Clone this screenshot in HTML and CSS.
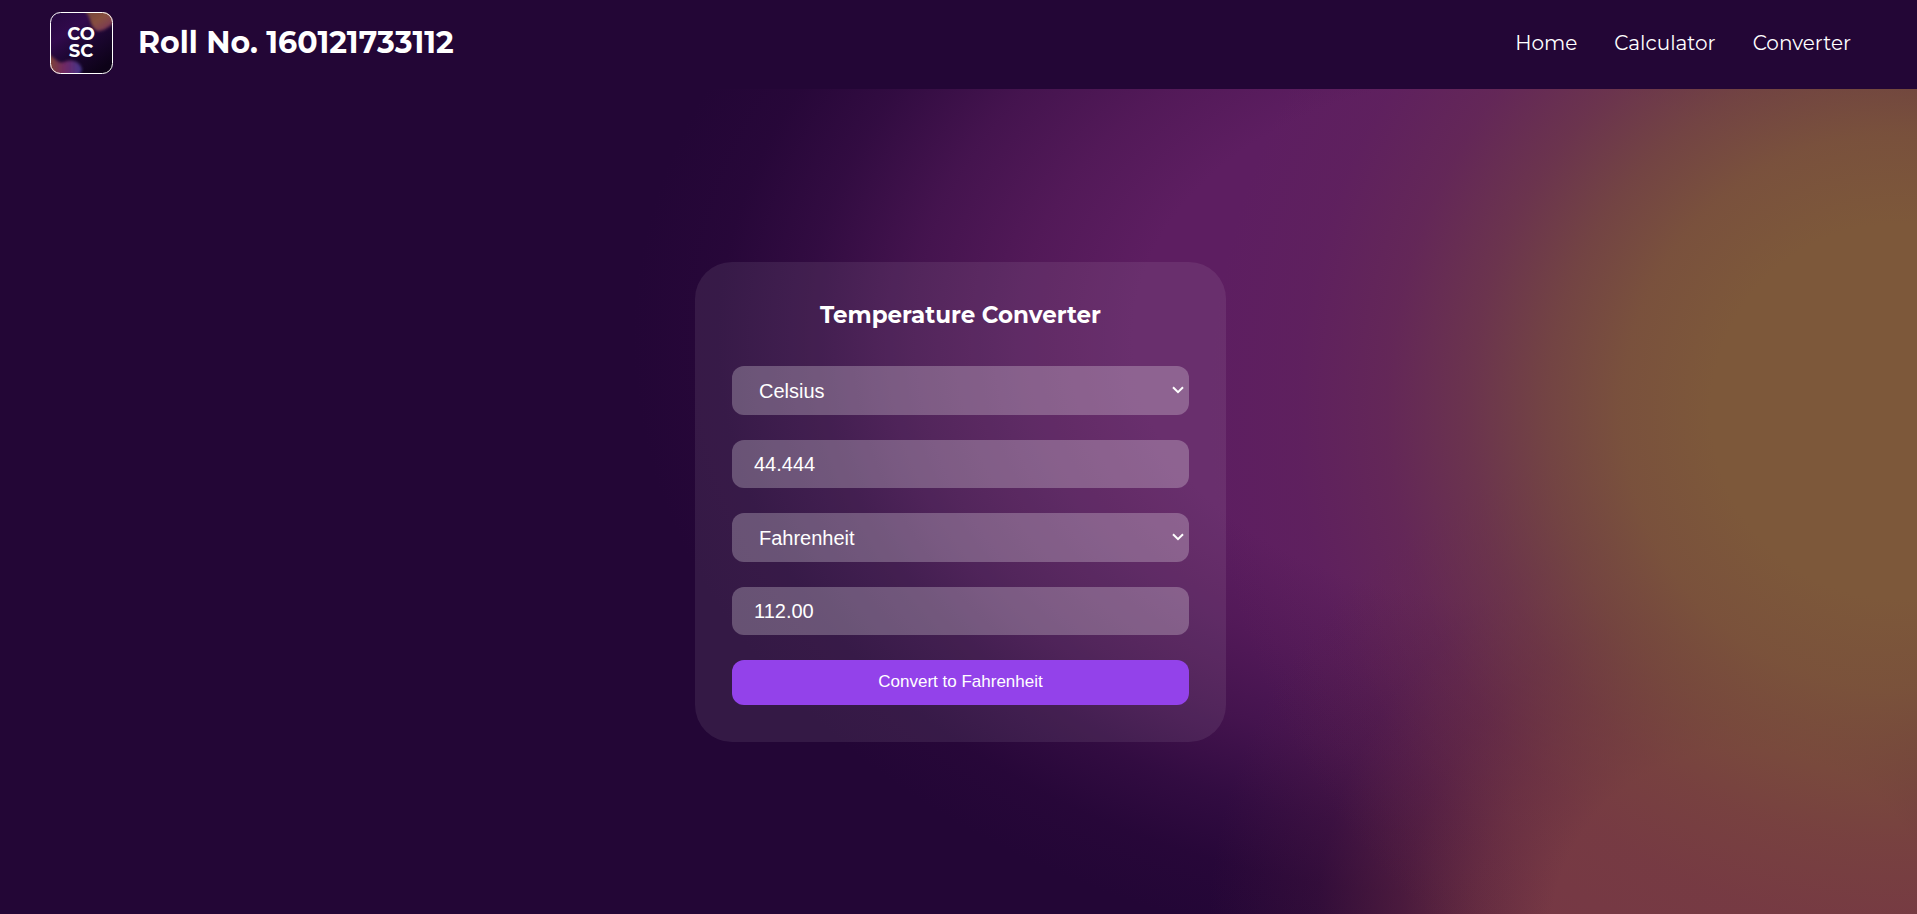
FILE: index.html
```html
<!DOCTYPE html>
<html lang="en">
<head>
<meta charset="utf-8">
<meta name="viewport" content="width=device-width, initial-scale=1">
<title>Temperature Converter</title>
<link rel="stylesheet" href="styles.css">
</head>
<body class="page">
<header class="header">
  <div class="brand">
    <svg class="logo" viewBox="0 0 63 62" role="img" aria-label="COSC">
      <defs>
        <linearGradient id="base" x1="0" y1="0" x2="0.7" y2="1">
          <stop offset="0" stop-color="#25083f"/>
          <stop offset="0.35" stop-color="#310a4c"/>
          <stop offset="0.65" stop-color="#1b0630"/>
          <stop offset="1" stop-color="#0d0218"/>
        </linearGradient>
        <linearGradient id="top" x1="0" y1="0" x2="1" y2="1">
          <stop offset="0" stop-color="#6b4238"/>
          <stop offset="0.5" stop-color="#87503f"/>
          <stop offset="1" stop-color="#742a62"/>
        </linearGradient>
        <linearGradient id="bottom" x1="0" y1="0" x2="1" y2="0">
          <stop offset="0" stop-color="#80492c"/>
          <stop offset="0.5" stop-color="#702764"/>
          <stop offset="1" stop-color="#42358c"/>
        </linearGradient>
        <filter id="soft"><feGaussianBlur stdDeviation="1.6"/></filter>
        <clipPath id="tile"><rect width="63" height="62" rx="10"/></clipPath>
      </defs>
      <g clip-path="url(#tile)">
        <rect width="63" height="62" fill="url(#base)"/>
        <path filter="url(#soft)" fill="url(#top)" d="M32-3C41 3 39 9 43 15C47 23 56 18 66 9V-3Z"/>
        <path filter="url(#soft)" fill="url(#bottom)" d="M-3 41C5 46 8 52 14 50C22 46 31 50 32 58L28 65H-3Z"/>
      </g>
      <rect x="0.5" y="0.5" width="62" height="61" rx="10" fill="none" stroke="#fff"/>
      <text class="logo-text"><tspan x="31" y="28">CO</tspan><tspan x="31" y="45">SC</tspan></text>
    </svg>
    <h1 class="roll">Roll No. 160121733112</h1>
  </div>
  <nav class="nav">
    <a href="#home">Home</a>
    <a href="#calculator">Calculator</a>
    <a href="#converter">Converter</a>
  </nav>
</header>
<main class="main">
  <form class="card">
    <h2 class="title">Temperature Converter</h2>
    <select class="field select" aria-label="From unit"><option>Celsius</option><option>Fahrenheit</option></select>
    <input class="field" type="text" aria-label="Temperature" value="44.444">
    <select class="field select" aria-label="To unit"><option>Fahrenheit</option><option>Celsius</option></select>
    <input class="field" type="text" aria-label="Result" value="112.00" readonly>
    <button class="submit" type="button">Convert to Fahrenheit</button>
  </form>
</main>
</body>
</html>
```
FILE: styles.css
```css
* { box-sizing: border-box; }

.page {
  margin: 0;
  min-height: 100vh;
  display: flex;
  flex-direction: column;
  color: #fff;
  font-family: Montserrat, Inter, sans-serif;
  background-color: #230636;
  background-image:
    radial-gradient(ellipse 36% 76% at 99% 45%, #7d583a 0%, #7d583a 27%, #7c553aec 40%, #7a503ac0 51%, #78483c84 62%, #743e4048 74%, #6d34481a 87%, #6d344800 100%),
    radial-gradient(ellipse 28% 56% at 91% 102%, #773944 0%, #773944 36%, #733443cc 50%, #6c2c4284 64%, #60244034 80%, #60244000 100%),
    radial-gradient(ellipse 45% 68% at 78% 37%, #5d1e61 0%, #5d1e61 42%, #591c5de0 55%, #541a5aac 68%, #4c16555c 80%, #440f4d20 90%, #350a4200 100%);
}

.header {
  height: 89px;
  padding: 0 66px 4px 50px;
  display: flex;
  align-items: center;
  justify-content: space-between;
  background: #230636;
}

.brand { display: flex; align-items: center; gap: 25px; }
.logo { width: 63px; height: 62px; display: block; }
.logo-text { font-size: 18px; font-weight: 700; text-anchor: middle; fill: #fff; }
.roll { margin: 0; font-size: 30px; font-weight: 700; line-height: 36px; }

.nav { display: flex; gap: 37px; }
.nav a { color: #fff; font-size: 20px; line-height: 24px; text-decoration: none; }

.main {
  flex: 1;
  display: flex;
  align-items: center;
  justify-content: center;
  padding: 24px 24px 24px 28px;
}

.card {
  width: 100%;
  max-width: 531px;
  padding: 37px;
  display: flex;
  flex-direction: column;
  gap: 25px;
  border-radius: 37px;
  background: rgba(255, 255, 255, 0.08);
}

.title { margin: 0 0 9px; font-size: 23px; line-height: 33px; font-weight: 700; text-align: center; }

.field {
  width: 100%;
  height: 48px;
  padding: 1px 22px 0;
  border: 0;
  border-radius: 12px;
  color: #fff;
  background: rgba(255, 255, 255, 0.25);
  font-family: "Liberation Sans", Arial, sans-serif;
  font-size: 20px;
}

.select {
  appearance: none;
  height: 49px;
  padding: 1px 24px 0 27px;
  background-image: url("data:image/svg+xml,%3Csvg xmlns='http://www.w3.org/2000/svg' width='12' height='8' viewBox='0 0 12 8'%3E%3Cpath d='M1 1.2L6 6.2L11 1.2' fill='none' stroke='white' stroke-width='2'/%3E%3C/svg%3E");
  background-repeat: no-repeat;
  background-position: right 5px center;
}
.select option { color: #230636; }

.submit {
  height: 45px;
  border: 0;
  border-radius: 12px;
  color: #fff;
  background: #9342ea;
  font-family: "Liberation Sans", Arial, sans-serif;
  font-size: 17px;
}
```
